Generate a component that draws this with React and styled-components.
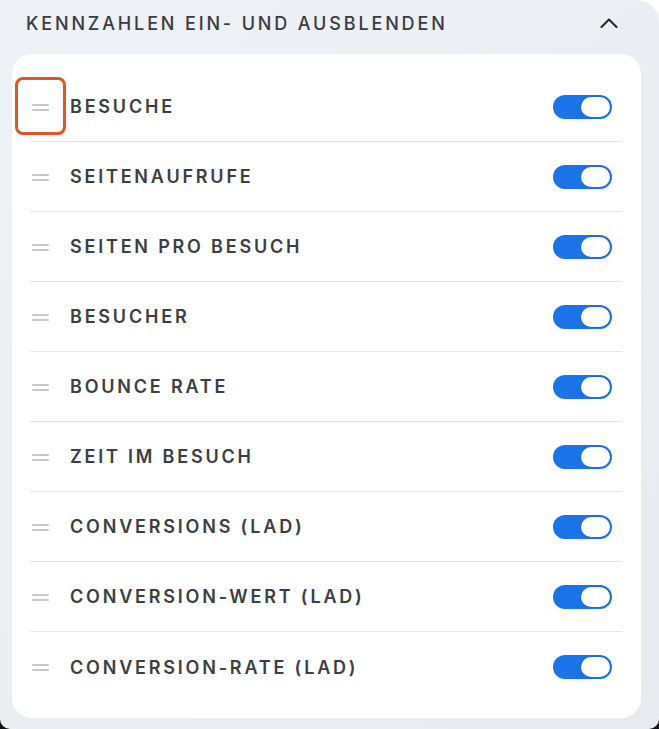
import React from "react";
import styled, { createGlobalStyle } from "styled-components";

const Global = createGlobalStyle`
  html, body { margin: 0; padding: 0; }
  body {
    background: linear-gradient(to bottom, #ffffff 0 90%, #111111 90% 100%);
    font-family: Inter, "Noto Sans", "Liberation Sans", sans-serif;
  }
`;

const Panel = styled.div`
  width: 659px;
  height: 729px;
  box-sizing: border-box;
  background: linear-gradient(135deg, #eef1f5 0%, #e7ebf0 100%);
  border-radius: 0 22px 10px 10px;
  padding: 0 18px 11px 12px;
  display: flex;
  flex-direction: column;
`;

const Header = styled.div`
  height: 46px;
  margin-bottom: 8px;
  display: flex;
  align-items: center;
  justify-content: space-between;
  padding: 0 23px 0 14px;
`;

const Title = styled.h2`
  margin: 0;
  font-size: 18px;
  font-weight: 500;
  letter-spacing: 2.85px;
  color: #383b40;
  text-transform: uppercase;
`;

const Chevron = styled.svg`
  width: 18px;
  height: 10px;
  display: block;
`;

const Card = styled.div`
  flex: 1;
  background: #ffffff;
  border-radius: 20px;
  padding: 18px 19px 16px 18px;
  display: flex;
  flex-direction: column;
`;

const Row = styled.div`
  position: relative;
  height: 70px;
  box-sizing: border-box;
  display: flex;
  align-items: center;
  padding-right: 10px;
  border-bottom: ${(p) => (p.$last ? "none" : "1px solid #e3e5e8")};
`;

const Handle = styled.div`
  width: 40px;
  height: 100%;
  display: flex;
  flex-direction: column;
  justify-content: center;
  gap: 3px;
  padding-left: 2px;
  box-sizing: border-box;
  margin-top: ${(p) => (p.$last ? "0" : "1px")};

  span {
    display: block;
    width: 17px;
    height: 2px;
    border-radius: 1px;
    background: #c6c8cb;
  }
`;

const Highlight = styled.div`
  position: absolute;
  left: -15px;
  top: 5px;
  width: 51px;
  height: 58px;
  box-sizing: border-box;
  border: 3px solid #e5531f;
  border-radius: 8px;
  pointer-events: none;
`;

const Label = styled.span`
  flex: 1;
  font-size: 18px;
  font-weight: 600;
  letter-spacing: 2.8px;
  color: #3b3e43;
  text-transform: uppercase;
`;

const Toggle = styled.div`
  width: 59px;
  height: 24px;
  border-radius: 12px;
  background: ${(p) => (p.$on ? "#1a74e8" : "#c9ccd1")};
  display: flex;
  align-items: center;
  justify-content: ${(p) => (p.$on ? "flex-end" : "flex-start")};
  padding: 0 2px;
  box-sizing: border-box;
`;

const Knob = styled.div`
  width: 29px;
  height: 20px;
  border-radius: 10px;
  background: #ffffff;
  box-shadow: 0 0 0 0.5px rgba(0, 0, 0, 0.15);
`;

const metrics = [
  "Besuche",
  "Seitenaufrufe",
  "Seiten pro Besuch",
  "Besucher",
  "Bounce Rate",
  "Zeit im Besuch",
  "Conversions (LAD)",
  "Conversion-Wert (LAD)",
  "Conversion-Rate (LAD)",
];

export default function App() {
  return (
    <>
      <Global />
      <Panel>
        <Header>
          <Title>Kennzahlen ein- und ausblenden</Title>
          <Chevron viewBox="0 0 18 10" fill="none">
            <path d="M1.5 9 L9 1.5 L16.5 9" stroke="#25272b" strokeWidth="2.1" strokeLinecap="round" strokeLinejoin="round" />
          </Chevron>
        </Header>
        <Card>
          {metrics.map((m, i) => (
            <Row key={m} $last={i === metrics.length - 1}>
              {i === 0 && <Highlight />}
              <Handle $last={i === metrics.length - 1}>
                <span />
                <span />
              </Handle>
              <Label>{m}</Label>
              <Toggle $on>
                <Knob />
              </Toggle>
            </Row>
          ))}
        </Card>
      </Panel>
    </>
  );
}
